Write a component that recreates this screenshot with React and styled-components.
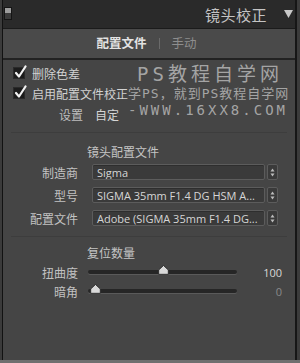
import React from "react";
import styled, { createGlobalStyle } from "styled-components";

const Global = createGlobalStyle`
  html, body { margin: 0; padding: 0; background: #3b3b3b; }
  body { font-family: "Noto Sans CJK SC", "Noto Sans", sans-serif; }
  * { box-sizing: border-box; }
`;

const Page = styled.div`
  width: 300px;
  height: 363px;
  background: #3b3b3b;
  display: flex;
  flex-direction: column;
  overflow: hidden;
`;

const Frame = styled.div`
  margin-left: 2px;
  width: 295px;
  height: 360px;
  border-left: 1px solid #121212;
  border-right: 2px solid #161616;
  display: flex;
  flex-direction: column;
  background: #2b2b2b;
`;

const BottomEdge = styled.div`
  height: 3px;
  background: #6f6f6f;
`;

const Header = styled.div`
  height: 28px;
  flex: none;
  display: flex;
  align-items: center;
  padding: 0 2px 0 1px;
  background: #2a2a2a;
`;

const Toggle = styled.div`
  width: 8px;
  height: 13px;
  border: 1px solid #151515;
  background: linear-gradient(#9c9c9c 0 50%, #3a3a3a 50% 100%);
  margin-bottom: 1px;
`;

const Title = styled.div`
  margin-left: auto;
  font-size: 15px;
  color: #c4c4c4;
  letter-spacing: 0.5px;
  line-height: 1;
`;

const Caret = styled.svg`
  margin-left: 17px;
  width: 9px;
  height: 8px;
  margin-right: 0px;
`;

const TabBar = styled.div`
  height: 32px;
  flex: none;
  border-top: 1px solid #1b1b1b;
  border-bottom: 2px solid #222;
  background: #4a4a4a;
  display: flex;
  align-items: center;
  justify-content: center;
  gap: 12px;
  padding-right: 5px;
`;

const Tab = styled.span`
  font-size: 12.5px;
  font-weight: ${(p) => (p.$active ? 700 : 400)};
  color: ${(p) => (p.$active ? "#e2e2e2" : "#8e8e8e")};
  line-height: 1;
`;

const TabSep = styled.span`
  width: 1px;
  height: 11px;
  background: #6a6a6a;
`;

const Content = styled.div`
  position: relative;
  flex: 1;
  background: #454545;
  padding-top: 3px;
  display: flex;
  flex-direction: column;
`;

const CheckRow = styled.label`
  height: 20px;
  display: flex;
  align-items: center;
  padding-left: 10px;
  gap: 7px;
  font-size: 12px;
  color: #d2d2d2;
`;

const Box = styled.span`
  position: relative;
  width: 12px;
  height: 12px;
  background: #1c1c1c;
  border: 1px solid #2a2a2a;
  flex: none;
`;

const Check = styled.svg`
  position: absolute;
  left: 0px;
  top: -3px;
  width: 13px;
  height: 14px;
`;

const SettingRow = styled.div`
  height: 22px;
  display: flex;
  align-items: center;
  font-size: 12px;
  color: #cdcdcd;
`;

const SettingLabel = styled.span`
  width: 80px;
  text-align: right;
  color: #bdbdbd;
`;

const SettingValue = styled.span`
  margin-left: 12px;
  color: #d6d6d6;
`;

const Divider = styled.div`
  height: 1px;
  margin: ${(p) => p.$top}px 8px 0 8px;
  background: #3d3d3d;
`;

const Heading = styled.div`
  height: 20px;
  margin-top: ${(p) => p.$top}px;
  padding-left: 84px;
  display: flex;
  align-items: center;
  font-size: 12px;
  color: #c4c4c4;
`;

const FieldRow = styled.div`
  height: 16px;
  margin-top: ${(p) => p.$top}px;
  display: flex;
  align-items: center;
`;

const FieldLabel = styled.span`
  width: 75px;
  text-align: right;
  font-size: 12px;
  color: #c2c2c2;
  flex: none;
`;

const Select = styled.div`
  margin-left: 14px;
  width: 173px;
  height: 16px;
  background: #3a3a3a;
  border: 1px solid #5c5c5c;
  border-radius: 2px;
  box-shadow: inset 0 1px 0 #2e2e2e;
  display: flex;
  align-items: center;
  padding-left: 4px;
  font-family: "Open Sans", "Liberation Sans", sans-serif;
  font-size: 11px;
  color: #d6d6d6;
  white-space: nowrap;
  overflow: hidden;
`;

const Spinner = styled.div`
  margin-left: 2px;
  width: 11px;
  height: 16px;
  background: #3a3a3a;
  border: 1px solid #5c5c5c;
  border-radius: 2px;
  display: flex;
  align-items: center;
  justify-content: center;
`;

const SliderRow = styled.div`
  height: 16px;
  margin-top: ${(p) => p.$top}px;
  display: flex;
  align-items: center;
`;

const Track = styled.div`
  position: relative;
  margin-left: 10px;
  width: 149px;
  height: 4px;
  border-radius: 2px;
  background: #262626;
  box-shadow: 0 1px 0 #5a5a5a;
`;

const Thumb = styled.svg`
  position: absolute;
  top: -5px;
  width: 11px;
  height: 10px;
`;

const Value = styled.span`
  margin-left: auto;
  margin-right: 13px;
  font-family: "Open Sans", "Liberation Sans", sans-serif;
  font-size: 11px;
  color: ${(p) => (p.$dim ? "#8a8a8a" : "#d8d8d8")};
`;

const Watermark = styled.div`
  position: absolute;
  left: 125px;
  top: 3px;
  display: flex;
  flex-direction: column;
  color: #a4a4a4;
  pointer-events: none;
  font-family: "DejaVu Sans Mono", "Noto Sans CJK SC", monospace;
  white-space: nowrap;
`;

const WmBig = styled.div`
  margin-left: 9px;
  font-size: 19px;
  letter-spacing: 4px;
  line-height: 22px;
`;

const WmMid = styled.div`
  font-size: 13px;
  letter-spacing: 1px;
  line-height: 16px;
  margin-top: 1px;
`;

const WmUrl = styled.div`
  font-size: 14px;
  letter-spacing: 3px;
  line-height: 16px;
`;

const CheckMark = () => (
  <Check viewBox="0 0 13 14">
    <path d="M2 8 L5 11.5 L11.5 1.5" fill="none" stroke="#f2f2f2" strokeWidth="2.2" strokeLinecap="round" strokeLinejoin="round" />
  </Check>
);

const Checkbox = ({ label }) => (
  <CheckRow>
    <Box>
      <CheckMark />
    </Box>
    {label}
  </CheckRow>
);

const SpinIcon = () => (
  <svg width="5" height="9" viewBox="0 0 5 9">
    <path d="M2.5 0.5 L4.5 3.5 L0.5 3.5 Z" fill="#bdbdbd" />
    <path d="M2.5 8.5 L4.5 5.5 L0.5 5.5 Z" fill="#bdbdbd" />
  </svg>
);

const Field = ({ label, value, top }) => (
  <FieldRow $top={top}>
    <FieldLabel>{label}</FieldLabel>
    <Select>{value}</Select>
    <Spinner>
      <SpinIcon />
    </Spinner>
  </FieldRow>
);

const Slider = ({ label, value, pos, top, dim }) => (
  <SliderRow $top={top}>
    <FieldLabel>{label}</FieldLabel>
    <Track>
      <Thumb viewBox="0 0 11 10" style={{ left: `${pos - 5.5}px` }}>
        <path d="M5.5 0.5 L10.3 5 L10.3 9.3 L0.7 9.3 L0.7 5 Z" fill="#d9d9d9" stroke="#1e1e1e" strokeWidth="0.8" />
      </Thumb>
    </Track>
    <Value $dim={dim}>{value}</Value>
  </SliderRow>
);

export default function App() {
  return (
    <>
      <Global />
      <Page>
        <Frame>
          <Header>
            <Toggle />
            <Title>镜头校正</Title>
            <Caret viewBox="0 0 9 8">
              <path d="M0 0 L9 0 L4.5 8 Z" fill="#c8c8c8" />
            </Caret>
          </Header>
          <TabBar>
            <Tab $active>配置文件</Tab>
            <TabSep />
            <Tab>手动</Tab>
          </TabBar>
          <Content>
            <Checkbox label="删除色差" />
            <Checkbox label="启用配置文件校正" />
            <SettingRow>
              <SettingLabel>设置</SettingLabel>
              <SettingValue>自定</SettingValue>
            </SettingRow>
            <Divider $top={7} />
            <Heading $top={8}>镜头配置文件</Heading>
            <Field top={3} label="制造商" value="Sigma" />
            <Field top={7} label="型号" value="SIGMA 35mm F1.4 DG HSM A..." />
            <Field top={7} label="配置文件" value="Adobe (SIGMA 35mm F1.4 DG..." />
            <Divider $top={10} />
            <Heading $top={5}>复位数量</Heading>
            <Slider top={2} label="扭曲度" value="100" pos={75} />
            <Slider top={3} label="暗角" value="0" pos={7} dim />
            <Watermark>
              <WmBig>PS教程自学网</WmBig>
              <WmMid>学PS，就到PS教程自学网</WmMid>
              <WmUrl>-WWW.16XX8.COM</WmUrl>
            </Watermark>
          </Content>
        </Frame>
        <BottomEdge />
      </Page>
    </>
  );
}
